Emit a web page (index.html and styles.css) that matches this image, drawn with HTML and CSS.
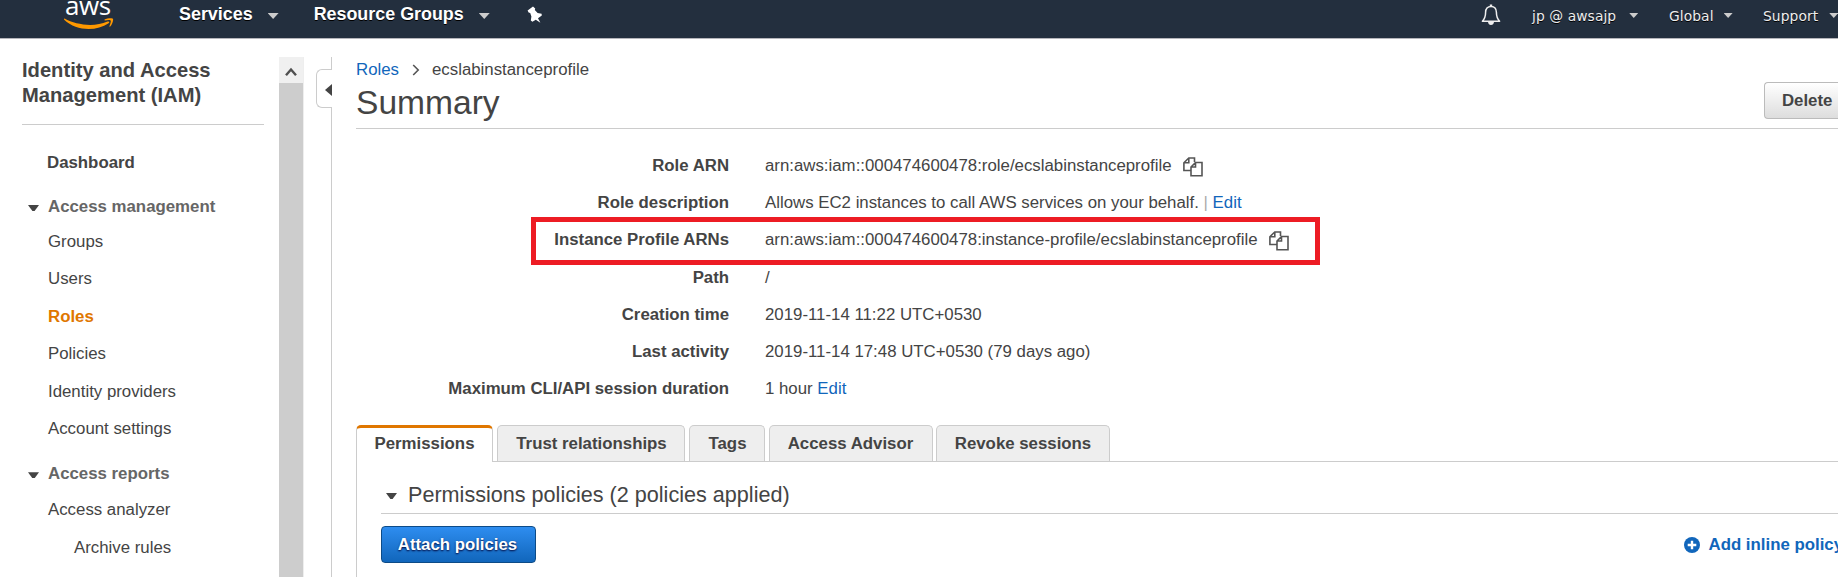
FILE: index.html
```html
<!DOCTYPE html>
<html lang="en">
<head>
<meta charset="utf-8">
<title>IAM - Role summary</title>
<link rel="stylesheet" href="styles.css">
</head>
<body>
<header class="topnav">
  <a class="logo">
    <span class="logo-text">aws</span>
    <svg class="logo-smile" width="50" height="12" viewBox="0 0 50 12"><path d="M.6 .6C12 7 30 9.500 43.500 3.600C45.500 3 46 4.200 44.600 5.200C32 13.800 12 13 .2 1.800C-.2 1.200 .1 .4 .6 .6z" fill="#ff9900"/><path d="M40.500 1.600C43 .2 48.500-.3 49 .9C49.600 2.300 48.200 6.500 46 8.800L45.300 8.400C46.300 6 47.200 3.200 46.600 2.500C46 1.800 43 2.100 40.700 2.500z" fill="#ff9900"/></svg>
  </a>
  <nav class="nav-main">
    <a class="nav-item">Services<i class="nav-caret nav-caret-main"></i></a>
    <a class="nav-item nav-groups">Resource Groups<i class="nav-caret nav-caret-main"></i></a>
    <svg class="pin" width="16" height="18" viewBox="0 0 16 18"><path d="M.6 4.500L6 .4L8.200 2.600L7.800 4L10.600 7L14.600 7.800L14.800 9.600L11 12.300L13.400 16.800L8.800 13.700L5.400 15.800L3.800 14.600L4.400 10.400L3.200 6.900L1.600 6.600z" fill="#fff"/></svg>
  </nav>
  <nav class="nav-side">
    <svg class="bell" width="20" height="22" viewBox="0 0 20 22"><path d="M10 2.400C6.500 2.400 4.600 5 4.600 8.300C4.600 13 3.600 15 1.400 17.300H18.600C16.400 15 15.400 13 15.400 8.300C15.400 5 13.500 2.400 10 2.400z" fill="none" stroke="#eee" stroke-width="1.500" stroke-linejoin="round"/><path d="M8.800 .6h2.400v2h-2.400zM7 18h6c-.3 2-1.300 3-3 3s-2.700-1-3-3z" fill="#eee"/></svg>
    <a class="side-item side-user">jp @ awsajp<i class="nav-caret"></i></a>
    <a class="side-item side-region">Global<i class="nav-caret"></i></a>
    <a class="side-item side-support">Support<i class="nav-caret"></i></a>
  </nav>
</header>
<div class="page">
  <aside class="sidebar">
    <h2 class="side-title">Identity and Access<br>Management (IAM)</h2>
    <a class="dashboard">Dashboard</a>
    <div class="group-head"><i class="caret"></i>Access management</div>
    <ul class="group">
      <li>Groups</li>
      <li>Users</li>
      <li class="active">Roles</li>
      <li>Policies</li>
      <li>Identity providers</li>
      <li>Account settings</li>
    </ul>
    <div class="group-head group-reports"><i class="caret"></i>Access reports</div>
    <ul class="group">
      <li>Access analyzer</li>
      <li class="nested">Archive rules</li>
    </ul>
  </aside>
  <div class="scrollbar">
    <div class="scroll-up"><svg width="12" height="10" viewBox="0 0 12 10"><path d="M1 8.200L6 2.500L11 8.200" fill="none" stroke="#505050" stroke-width="2.400"/></svg></div>
  </div>
  <div class="splitter">
    <div class="split-line split-top"></div>
    <div class="split-handle"><i class="split-arrow"></i></div>
    <div class="split-line split-rest"></div>
  </div>
  <main class="content">
    <div class="heading">
      <div>
        <div class="crumbs"><a class="link">Roles</a><svg class="chevron" width="8" height="12" viewBox="0 0 8 12"><path d="M1.200 1L6.200 6L1.200 11" fill="none" stroke="#555" stroke-width="1.600"/></svg><span>ecslabinstanceprofile</span></div>
        <h1 class="title">Summary</h1>
      </div>
      <button class="btn btn-delete">Delete</button>
    </div>
    <dl class="details">
      <div class="row"><dt>Role ARN</dt><dd>arn:aws:iam::000474600478:role/ecslabinstanceprofile<svg class="copy" width="20" height="20" viewBox="0 0 20 20"><path d="M7.800 13.500H.9V5.800L5.800 1H11.500V5M5.800 1V5.800H.9M8 10L12.500 5.500H19V18.700H8zM12.500 5.500V10H8" fill="none" stroke="#555" stroke-width="1.600"/></svg></dd></div>
      <div class="row"><dt>Role description</dt><dd>Allows EC2 instances to call AWS services on your behalf. <span class="bar">| </span><a class="link">Edit</a></dd></div>
      <div class="row marked"><dt>Instance Profile ARNs</dt><dd>arn:aws:iam::000474600478:instance-profile/ecslabinstanceprofile<svg class="copy" width="20" height="20" viewBox="0 0 20 20"><path d="M7.800 13.500H.9V5.800L5.800 1H11.500V5M5.800 1V5.800H.9M8 10L12.500 5.500H19V18.700H8zM12.500 5.500V10H8" fill="none" stroke="#555" stroke-width="1.600"/></svg></dd></div>
      <div class="row"><dt>Path</dt><dd>/</dd></div>
      <div class="row"><dt>Creation time</dt><dd>2019-11-14 11:22 UTC+0530</dd></div>
      <div class="row"><dt>Last activity</dt><dd>2019-11-14 17:48 UTC+0530 (79 days ago)</dd></div>
      <div class="row"><dt>Maximum CLI/API session duration</dt><dd>1 hour <a class="link">Edit</a></dd></div>
    </dl>
    <div class="tabs">
      <a class="tab tab-active">Permissions</a>
      <a class="tab tab-trust">Trust relationships</a>
      <a class="tab tab-tags">Tags</a>
      <a class="tab tab-advisor">Access Advisor</a>
      <a class="tab tab-revoke">Revoke sessions</a>
    </div>
    <section class="panel">
      <h3 class="panel-title"><i class="caret"></i>Permissions policies (2 policies applied)</h3>
      <div class="actions">
        <button class="btn btn-primary">Attach policies</button>
        <a class="inline-policy link"><svg width="16" height="16" viewBox="0 0 16 16"><circle cx="8" cy="8" r="8" fill="#1166bb"/><path d="M8 3.700V12.300M3.700 8H12.300" stroke="#fff" stroke-width="2.400"/></svg>Add inline policy</a>
      </div>
    </section>
  </main>
</div>
</body>
</html>
```
FILE: styles.css
```css
*, *::after { box-sizing: border-box; }

body {
  margin: 0;
  height: 577px;
  overflow: hidden;
  background: #fff;
  color: #444;
  font: 16.82px/20px "Liberation Sans", Arial, sans-serif;
  white-space: nowrap;
}

h1, h2, h3, ul, dl, dd { margin: 0; padding: 0; }
ul { list-style: none; }
svg { display: block; flex: none; }
.link { color: #1166bb; }

/* Top navigation */
.topnav {
  display: flex;
  height: 39px;
  background: #232f3e;
  border-bottom: 1px solid #b5b5bb;
  color: #fff;
}
.logo { width: 179px; padding-left: 64px; flex: none; }
.logo-text {
  display: block;
  height: 18px;
  padding-left: 1px;
  font: 500 26px/10px "Open Sans", sans-serif;
  letter-spacing: -0.4px;
}
.logo-smile { width: 50px; }
.nav-main { display: flex; align-items: flex-start; }
.nav-item {
  display: flex;
  padding-top: 4px;
  font-size: 17.9px;
  font-weight: bold;
  text-shadow: 0 1px 0 #000;
}
.nav-groups { margin-left: 35px; }
.nav-caret {
  width: 9px;
  height: 5px;
  margin: 7px 0 0 11px;
  background: #ccc;
  clip-path: polygon(0 0, 100% 0, 50% 100%);
}
.nav-caret-main { width: 11px; height: 6px; margin: 9px 0 0 15px; }
.pin { margin: 6px 0 0 37px; }
.nav-side { display: flex; margin-left: auto; width: 358px; flex: none; }
.bell { margin: 4px 0 0 1px; }
.side-item {
  display: flex;
  padding-top: 6px;
  flex: none;
  font: 13.8px/20px "DejaVu Sans", Verdana, sans-serif;
  letter-spacing: 0.1px;
  color: #eee;
  text-shadow: 0 1px 0 #000;
}
.side-user { width: 137px; margin-left: 31px; }
.side-user .nav-caret { margin-left: 13px; }
.side-region { width: 94px; }
.side-region .nav-caret { margin-left: 10px; }

/* Sidebar */
.page { display: flex; height: 538px; padding-top: 18px; }
.sidebar { width: 279px; padding: 0 15px 0 22px; flex: none; }
.side-title {
  height: 68px;
  padding-top: 1px;
  border-bottom: 1px solid #ccc;
  font-size: 20.16px;
  line-height: 25px;
}
.dashboard {
  display: block;
  padding: 28px 0 0 25px;
  font-weight: bold;
}
.group-head {
  display: flex;
  align-items: center;
  height: 20px;
  margin-top: 24px;
  padding-left: 6px;
  font-weight: bold;
  color: #666;
}
.caret {
  width: 11px;
  height: 6px;
  margin: 2px 9px 0 0;
  background: #444;
  clip-path: polygon(0 0, 100% 0, 60% 100%, 40% 100%);
}
.group { padding: 6px 0 0 26px; }
.group li { height: 37.4px; line-height: 37.4px; }
.group .active { color: #e07700; font-weight: bold; }
.group .nested { padding-left: 26px; }
.group-reports { margin-top: 17px; }
.group-reports + .group { padding-top: 7px; }

.scrollbar { width: 25px; flex: none; background: #cdcdcd; border-right: 1px solid #eee; }
.scroll-up {
  display: flex;
  justify-content: center;
  height: 26px;
  padding-top: 10px;
  background: #f0f0f0;
}

.splitter {
  display: flex;
  flex-direction: column;
  align-items: flex-end;
  width: 28px;
  flex: none;
}
.split-line { width: 1px; background: #ccc; }
.split-top { height: 12px; }
.split-rest { flex: 1; }
.split-handle {
  display: flex;
  justify-content: flex-end;
  align-items: center;
  width: 16px;
  height: 39px;
  padding-top: 3px;
  border: 1px solid #ccc;
  border-right: 0;
  border-radius: 6px 0 0 6px;
}
.split-arrow {
  width: 7px;
  height: 12px;
  background: #444;
  clip-path: polygon(100% 0, 100% 100%, 0 50%);
}

/* Content */
.content { width: 1506px; padding-left: 24px; flex: none; overflow: hidden; }
.heading {
  display: flex;
  justify-content: space-between;
  height: 72px;
  border-bottom: 1px solid #ccc;
}
.crumbs { display: flex; align-items: center; padding-top: 3px; }
.chevron { margin: 0 12px 0 13px; }
.title { font-size: 33.6px; font-weight: normal; line-height: 40px; padding-top: 3px; }
.btn {
  height: 37px;
  border-radius: 4px;
  padding: 0 16px;
  font: bold 16.8px/35px "Liberation Sans", Arial, sans-serif;
}
.btn-delete {
  width: 74px;
  margin-top: 25px;
  border: 1px solid #bbb;
  border-right: 0;
  border-radius: 4px 0 0 4px;
  background: linear-gradient(#fff, #ddd);
  color: #444;
  text-align: left;
  padding-left: 17px;
}
.details { padding-top: 18px; height: 296px; }
.row { display: flex; height: 37.2px; line-height: 37.2px; position: relative; }
.row dt { width: 373px; margin-right: 36px; text-align: right; font-weight: bold; font-size: 16.8px; flex: none; }
.row dd { display: flex; white-space: pre; }
.copy { margin: 10px 0 0 11px; }
.bar { color: #aaa; }
.marked::after {
  content: "";
  position: absolute;
  left: 175px;
  top: -4px;
  width: 789px;
  height: 48px;
  border: 5px solid #ed1c24;
}

/* Tabs */
.tabs { display: flex; gap: 4px; height: 37px; border-bottom: 1px solid #ccc; }
.tab {
  height: 36px;
  border: 1px solid #ccc;
  border-bottom: 0;
  border-radius: 5px 5px 0 0;
  background: #eee;
  font-weight: bold;
  line-height: 35px;
  text-align: center;
}
.tab-active {
  width: 137px;
  height: 37px;
  border-top: 3px solid #e07700;
  background: #fff;
  line-height: 31px;
}
.tab-trust { width: 188px; padding-left: 1px; }
.tab-tags { width: 76px; padding-left: 1px; }
.tab-advisor { width: 164px; padding-right: 1px; }
.tab-revoke { width: 174px; margin-left: -1px; }

.panel { height: 115px; padding-left: 24px; border-left: 1px solid #ccc; }
.panel-title {
  display: flex;
  align-items: center;
  height: 52px;
  padding: 14px 0 0 5px;
  border-bottom: 1px solid #ccc;
  font-size: 21.6px;
  font-weight: normal;
  line-height: 38px;
}
.panel-title .caret { margin: 3px 11px 0 0; }
.actions { display: flex; align-items: center; justify-content: space-between; padding-top: 12px; }
.btn-primary {
  width: 155px;
  padding: 0 2px 0 0;
  border: 1px solid #0d4b87;
  background: linear-gradient(#2e8df0, #1166bb);
  color: #fff;
  text-align: center;
  text-shadow: 0 1px 2px #003;
}
.inline-policy {
  display: flex;
  align-items: center;
  gap: 9px;
  width: 154.5px;
  font-weight: bold;
}
```
